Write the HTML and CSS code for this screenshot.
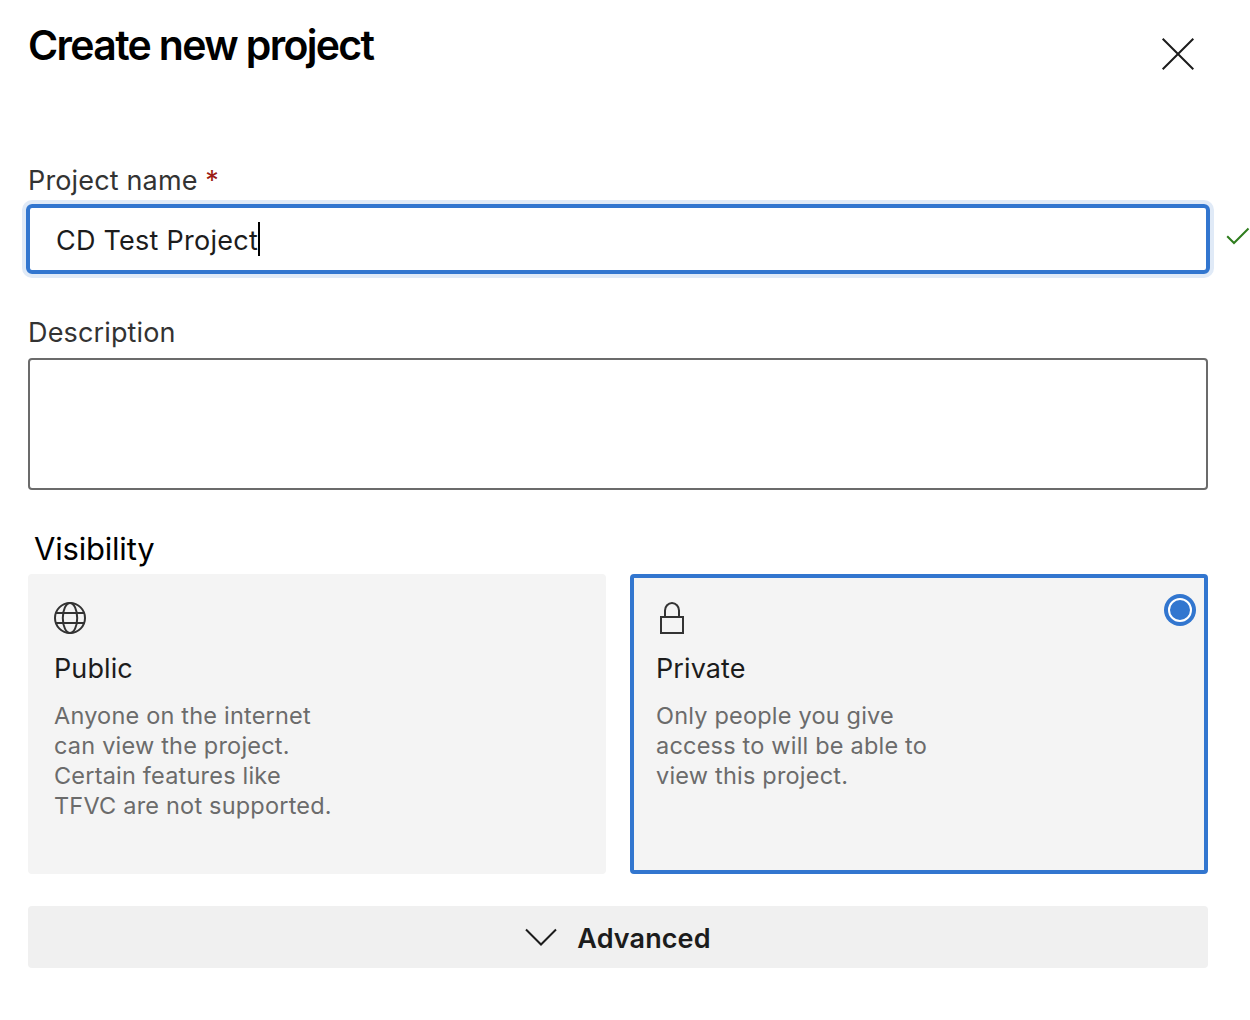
FILE: index.html
```html
<!DOCTYPE html>
<html lang="en">
<head>
<meta charset="utf-8">
<title>Create new project</title>
<link rel="stylesheet" href="styles.css">
</head>
<body>
<main class="panel">
  <header class="header">
    <h1 class="title">Create new project</h1>
    <svg class="close" width="34" height="34" viewBox="0 0 34 34"><path d="M1.7 1.7 32.3 32.3M32.3 1.7 1.7 32.3"/></svg>
  </header>

  <div class="label">Project name <span class="required">*</span></div>
  <div class="name-row">
    <div class="input"><span class="value">CD Test Project</span><span class="caret"></span></div>
    <svg class="check" width="24" height="20" viewBox="0 0 24 20"><path d="M1.2 9.2 8 16 22.5 1.5"/></svg>
  </div>

  <div class="label label-description">Description</div>
  <div class="textarea"></div>

  <h2 class="section-title">Visibility</h2>
  <div class="cards">
    <section class="card">
      <svg class="icon" width="32" height="32" viewBox="0 0 32 32"><circle cx="16" cy="16" r="15"/><ellipse cx="16" cy="16" rx="7.2" ry="15"/><path d="M2 11h28M2 21h28"/></svg>
      <h3 class="card-title">Public</h3>
      <p class="card-text">Anyone on the internet<br>can view the project.<br>Certain features like<br>TFVC are not supported.</p>
    </section>
    <section class="card card-selected">
      <svg class="icon" width="32" height="32" viewBox="0 0 32 32"><path d="M5 15h22v16H5zM9 15V8.500a7 7.500 0 0 1 14 0V15"/></svg>
      <h3 class="card-title">Private</h3>
      <p class="card-text">Only people you give<br>access to will be able to<br>view this project.</p>
      <svg class="radio" width="32" height="32" viewBox="0 0 32 32"><circle class="radio-fill" cx="16" cy="16" r="16"/><circle class="radio-ring" cx="16" cy="16" r="11"/></svg>
    </section>
  </div>

  <div class="advanced">
    <svg class="chevron" width="32" height="18" viewBox="0 0 32 18"><path d="M1 1.500 16 16.500 31 1.500"/></svg>
    <span class="advanced-text">Advanced</span>
  </div>
</main>
</body>
</html>
```
FILE: styles.css
```css
* { box-sizing: border-box; }
body {
  margin: 0;
  background: #fff;
  color: #1c1c1c;
  font-family: Inter, "Liberation Sans", sans-serif;
  overflow: hidden;
}
svg { display: block; flex: none; fill: none; stroke: #333; stroke-width: 2; }
h1, h2, h3, p { margin: 0; }
.panel { width: 1250px; height: 1020px; padding: 20px 0 0 28px; }
.header { display: flex; justify-content: space-between; align-items: flex-start; height: 140px; padding-right: 55px; }
.title { font-size: 41px; line-height: 50px; font-weight: 600; letter-spacing: -1.65px; color: #000; white-space: nowrap; }
.close { margin-top: 17px; stroke: #1c1c1c; }
.label { height: 40px; font-size: 27px; line-height: 42px; letter-spacing: 0.15px; color: #333; white-space: nowrap; }
.required { color: #9c1c13; }
.name-row { display: flex; align-items: center; gap: 16px; margin: 4px 0 0 -2px; height: 70px; }
.input {
  display: flex;
  align-items: center;
  width: 1184px;
  height: 70px;
  padding-left: 26px;
  border: 4px solid #3276cf;
  border-radius: 6px;
  box-shadow: 0 0 0 4px #e0eaf7;
  font-size: 27px;
  line-height: 40px;
}
.value { padding-top: 3px; letter-spacing: 0.25px; white-space: nowrap; }
.caret { width: 2px; height: 34px; background: #000; }
.check { margin-bottom: 4px; stroke: #2f7d1e; }
.label-description { margin-top: 38px; }
.textarea { width: 1180px; height: 132px; margin-top: 6px; border: 2px solid #6b6b6b; border-radius: 4px; }
.section-title { margin: 38px 0 0 6px; height: 46px; font-size: 31px; line-height: 42px; font-weight: 400; letter-spacing: -0.2px; color: #000; }
.cards { display: grid; grid-template-columns: 578px 578px; gap: 24px; height: 300px; }
.card { position: relative; padding: 28px 26px; border-radius: 4px; background: #f4f4f4; }
.card-selected { padding: 24px 22px; border: 4px solid #3276cf; }
.card-title { margin-top: 15px; font-size: 27px; line-height: 40px; font-weight: 400; letter-spacing: 0.1px; white-space: nowrap; }
.card-text { margin-top: 12px; font-size: 23.500px; line-height: 30px; letter-spacing: 0.2px; color: #6b6b6b; white-space: nowrap; }
.radio { position: absolute; top: 16px; right: 8px; }
.radio-fill { fill: #3276cf; stroke: none; }
.radio-ring { stroke: #fff; }
.advanced {
  display: flex;
  justify-content: center;
  align-items: center;
  gap: 20px;
  width: 1180px;
  height: 62px;
  margin-top: 32px;
  border-radius: 4px;
  background: #f0f0f0;
}
.chevron { stroke: #1c1c1c; }
.advanced-text { padding-top: 4px; font-size: 27px; line-height: 40px; font-weight: 600; letter-spacing: 0.1px; }
```
